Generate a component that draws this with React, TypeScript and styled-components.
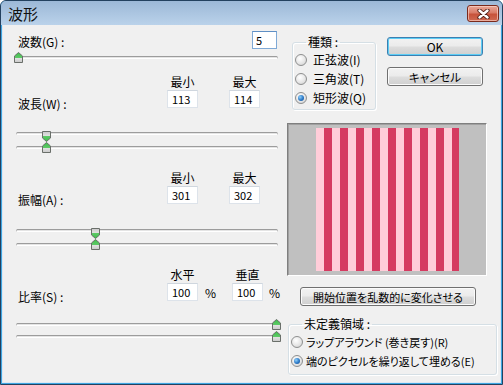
import React from 'react';
import styled, { createGlobalStyle } from 'styled-components';

const GlobalStyle = createGlobalStyle`
  html, body {
    margin: 0;
    padding: 0;
    background: #ffffff;
  }
  body {
    font-family: "Noto Sans CJK JP", "Noto Sans", sans-serif;
    font-size: 12px;
    color: #000;
    font-feature-settings: "palt";
  }
`;

const Window = styled.div`
  width: 503px;
  height: 385px;
  box-sizing: border-box;
  border: 1px solid #23415f;
  border-radius: 6px 6px 0 0;
  background: #3ea6e2;
  display: flex;
  flex-direction: column;
  overflow: hidden;
`;

const TitleBar = styled.div`
  height: 24px;
  flex: none;
  background: linear-gradient(#9cb8d7, #bad2ea);
  display: flex;
  align-items: flex-start;
  justify-content: space-between;
  padding: 0 3px 0 7px;
`;

const TitleText = styled.span`
  font-size: 15px;
  line-height: 24px;
  padding-top: 1px;
  color: #111;
`;

const CloseButton = styled.div`
  margin-top: 4px;
  width: 32px;
  height: 17px;
  box-sizing: border-box;
  border: 1px solid #7a2a1c;
  border-radius: 3px;
  background: linear-gradient(#e9a898 0%, #d97c68 45%, #c7533b 55%, #cf6a52 100%);
  box-shadow: inset 0 0 0 1px rgba(255, 220, 210, 0.6);
  display: flex;
  align-items: center;
  justify-content: center;
`;

const Panel = styled.div`
  flex: 1;
  margin: 0 1px 1px 1px;
  background: #f0f0f0;
  border: 1px solid #dce7f3;
  border-top: none;
  display: grid;
  grid-template-columns: 261px 210px;
  column-gap: 10px;
  align-items: start;
  padding: 6px 0 0 13px;
`;

const LeftColumn = styled.div`
  display: flex;
  flex-direction: column;
`;

const RightColumn = styled.div`
  display: flex;
  flex-direction: column;
  padding-top: 4px;
`;

const TopLine = styled.div`
  display: flex;
  justify-content: space-between;
  height: 18px;
`;

const Label = styled.span<{ $top: number }>`
  margin-top: ${(p) => p.$top}px;
  line-height: 14px;
  padding-left: 2px;
  white-space: nowrap;
`;

const NumBox = styled.input<{ $col?: number; $focus?: boolean }>`
  grid-row: 2;
  grid-column: ${(p) => p.$col ?? 'auto'};
  width: ${(p) => (p.$focus ? 25 : 31)}px;
  height: 18px;
  box-sizing: border-box;
  margin: 0;
  padding: 0 0 0 ${(p) => (p.$focus ? 3 : 4)}px;
  border: 1px solid ${(p) => (p.$focus ? '#7fa9d6' : '#dde3ea')};
  border-top-color: ${(p) => (p.$focus ? '#5f8fc5' : '#cfd6de')};
  background: #fff;
  font-family: "Noto Sans CJK JP", "Noto Sans", sans-serif;
  font-size: 11px;
  color: #000;
  outline: none;
`;

const ParamGrid = styled.div<{ $cols: string; $mt: number }>`
  display: grid;
  grid-template-columns: ${(p) => p.$cols};
  grid-template-rows: 15px 18px;
  margin-top: ${(p) => p.$mt}px;
`;

const ColHead = styled.span<{ $col: number }>`
  grid-row: 1;
  grid-column: ${(p) => p.$col};
  justify-self: center;
  line-height: 14px;
`;

const GridLabel = styled.span`
  grid-row: 2;
  grid-column: 1;
  margin-top: 7px;
  line-height: 14px;
  padding-left: 2px;
  white-space: nowrap;
`;

const Percent = styled.span<{ $col: number; $pl: number }>`
  grid-row: 2;
  grid-column: ${(p) => p.$col};
  padding-left: ${(p) => p.$pl}px;
  margin-top: 3px;
  line-height: 14px;
`;

const Tracks = styled.div<{ $mt: number; $gap: number }>`
  display: flex;
  flex-direction: column;
  gap: ${(p) => p.$gap}px;
  margin-top: ${(p) => p.$mt}px;
`;

const TrackRow = styled.div`
  position: relative;
  height: 12px;
`;

const Groove = styled.div`
  position: absolute;
  left: 0;
  right: -1px;
  top: 5px;
  height: 3px;
  box-sizing: border-box;
  border: 1px solid #b9b9b9;
  border-top-color: #9c9c9c;
  border-bottom-color: #ffffff;
  border-radius: 2px;
  background: #e4e4e4;
`;

const ThumbWrap = styled.span<{ $x: number; $down?: boolean }>`
  position: absolute;
  left: ${(p) => p.$x - 4.5}px;
  top: ${(p) => (p.$down ? 4 : 1)}px;
  width: 9px;
  height: 11px;
  display: block;
  line-height: 0;
`;

const TopRow = styled.div`
  display: flex;
  align-items: flex-start;
`;

const Group = styled.fieldset<{ $w: number; $ml: number; $mt?: number; $pb: number; $fs?: number }>`
  margin: ${(p) => p.$mt ?? 0}px 0 0 ${(p) => p.$ml}px;
  width: ${(p) => p.$w}px;
  min-width: 0;
  box-sizing: border-box;
  border: 1px solid #d5dfe5;
  border-radius: 3px;
  box-shadow: inset 1px 1px 0 #ffffff, 1px 1px 0 #ffffff;
  padding: 1px 0 ${(p) => p.$pb}px 2px;
  font-size: ${(p) => p.$fs ?? 12}px;
`;

const Legend = styled.legend`
  margin-left: 11px;
  padding: 0 2px;
  line-height: 14px;
  font-size: 12px;
`;

const Choice = styled.label<{ $gap: number }>`
  display: flex;
  align-items: center;
  height: 19px;
  gap: ${(p) => p.$gap}px;
  white-space: nowrap;
`;

const RadioDot = styled.span<{ $on?: boolean }>`
  width: 12px;
  height: 12px;
  flex: none;
  box-sizing: border-box;
  border-radius: 50%;
  border: 1px solid #8e8f8f;
  background: radial-gradient(circle at 40% 35%, #ffffff 0%, #e6e6e6 55%, #c9c9c9 100%);
  display: flex;
  align-items: center;
  justify-content: center;

  &::after {
    content: '';
    width: 6px;
    height: 6px;
    border-radius: 50%;
    background: ${(p) =>
      p.$on ? 'radial-gradient(circle at 35% 35%, #8fd0fb 0%, #2b78c6 55%, #154d8c 100%)' : 'transparent'};
  }
`;

const ButtonStack = styled.div`
  display: flex;
  flex-direction: column;
  gap: 11px;
  margin: 2px 0 0 11px;
`;

const PushButton = styled.button<{ $w: number; $default?: boolean; $ml?: number; $mt?: number; $fs?: number }>`
  width: ${(p) => p.$w}px;
  height: 19px;
  margin: ${(p) => p.$mt ?? 0}px 0 0 ${(p) => p.$ml ?? 0}px;
  padding: 0;
  box-sizing: border-box;
  border: 1px solid ${(p) => (p.$default ? '#3c7fb1' : '#707070')};
  border-radius: 3px;
  background: linear-gradient(#f2f2f2 0%, #ebebeb 48%, #dddddd 52%, #cfcfcf 100%);
  box-shadow: inset 0 0 0 1px ${(p) => (p.$default ? '#5ccdf5' : '#fbfbfb')};
  font-family: "Noto Sans CJK JP", "Noto Sans", sans-serif;
  font-feature-settings: "palt";
  font-size: ${(p) => p.$fs ?? 12}px;
  line-height: 16px;
  color: #000;
`;

const Preview = styled.div`
  margin-top: 13px;
  width: 200px;
  height: 153px;
  box-sizing: border-box;
  border: 1px solid;
  border-color: #7f7f7f #ffffff #ffffff #7f7f7f;
  box-shadow: inset 1px 1px 0 #a0a0a0;
  background: #c0c0c0;
  display: flex;
  align-items: center;
  justify-content: center;
`;

const Stripes = styled.div`
  width: 143px;
  height: 143px;
  background: repeating-linear-gradient(90deg, #ffcdd9 0 8px, #d53b61 8px 16px);
`;

const Thumb: React.FC<{ x: number; down?: boolean }> = ({ x, down }) => (
  <ThumbWrap $x={x} $down={down}>
    <svg width="9" height="11" viewBox="0 0 9 11">
      <defs>
        <linearGradient id="thumbUp" x1="0" y1="0" x2="0" y2="1">
          <stop offset="0" stopColor="#3fbf4c" />
          <stop offset="0.5" stopColor="#5cc865" />
          <stop offset="0.55" stopColor="#e2e2e2" />
          <stop offset="1" stopColor="#c9c9c9" />
        </linearGradient>
        <linearGradient id="thumbDown" x1="0" y1="1" x2="0" y2="0">
          <stop offset="0" stopColor="#3fbf4c" />
          <stop offset="0.5" stopColor="#5cc865" />
          <stop offset="0.55" stopColor="#e2e2e2" />
          <stop offset="1" stopColor="#c9c9c9" />
        </linearGradient>
      </defs>
      {down ? (
        <polygon points="0.5,0.5 8.5,0.5 8.5,7 4.5,10.5 0.5,7" fill="url(#thumbDown)" stroke="#6a6f6a" />
      ) : (
        <polygon points="4.5,0.5 8.5,4 8.5,10.5 0.5,10.5 0.5,4" fill="url(#thumbUp)" stroke="#6a6f6a" />
      )}
    </svg>
  </ThumbWrap>
);

const Hourglass: React.FC<{ x: number; mt: number }> = ({ x, mt }) => (
  <Tracks $mt={mt} $gap={2}>
    <TrackRow>
      <Groove />
      <Thumb x={x} down />
    </TrackRow>
    <TrackRow>
      <Groove />
      <Thumb x={x} />
    </TrackRow>
  </Tracks>
);

const MinMax: React.FC<{ label: string; mt: number; lo: string; hi: string }> = ({ label, mt, lo, hi }) => (
  <ParamGrid $cols="151px 31px 31px 31px 17px" $mt={mt}>
    <ColHead $col={2}>最小</ColHead>
    <ColHead $col={4}>最大</ColHead>
    <GridLabel>{label}</GridLabel>
    <NumBox $col={2} defaultValue={lo} readOnly />
    <NumBox $col={4} defaultValue={hi} readOnly />
  </ParamGrid>
);

const Radio: React.FC<{ on?: boolean; gap: number; children: React.ReactNode }> = ({ on, gap, children }) => (
  <Choice $gap={gap}>
    <RadioDot $on={on} />
    <span>{children}</span>
  </Choice>
);

export default function App() {
  return (
    <>
      <GlobalStyle />
      <Window>
        <TitleBar>
          <TitleText>波形</TitleText>
          <CloseButton>
            <svg width="13" height="10" viewBox="0 0 13 10">
              <path d="M2.5 1.5 L10.5 8.5 M10.5 1.5 L2.5 8.5" stroke="#4d1b12" strokeWidth="4.2" strokeLinecap="round" />
              <path d="M2.5 1.5 L10.5 8.5 M10.5 1.5 L2.5 8.5" stroke="#ffffff" strokeWidth="2.4" strokeLinecap="round" />
            </svg>
          </CloseButton>
        </TitleBar>
        <Panel>
          <LeftColumn>
            <TopLine>
              <Label $top={4}>波数(G) :</Label>
              <NumBox $focus defaultValue="5" readOnly />
            </TopLine>
            <Tracks $mt={2} $gap={0}>
              <TrackRow>
                <Groove />
                <Thumb x={2.5} />
              </TrackRow>
            </Tracks>

            <MinMax label="波長(W) :" mt={12} lo="113" hi="114" />
            <Hourglass x={30} mt={19} />

            <MinMax label="振幅(A) :" mt={18} lo="301" hi="302" />
            <Hourglass x={79} mt={20} />

            <ParamGrid $cols="151px 31px 34px 31px 14px" $mt={18}>
              <ColHead $col={2}>水平</ColHead>
              <ColHead $col={4}>垂直</ColHead>
              <GridLabel>比率(S) :</GridLabel>
              <NumBox $col={2} defaultValue="100" readOnly />
              <Percent $col={3} $pl={7}>%</Percent>
              <NumBox $col={4} defaultValue="100" readOnly />
              <Percent $col={5} $pl={6}>%</Percent>
            </ParamGrid>
            <Tracks $mt={17} $gap={0}>
              <TrackRow>
                <Groove />
                <Thumb x={260} />
              </TrackRow>
              <TrackRow>
                <Groove />
                <Thumb x={260} />
              </TrackRow>
            </Tracks>
          </LeftColumn>

          <RightColumn>
            <TopRow>
              <Group $w={84} $ml={5} $pb={2}>
                <Legend>種類 :</Legend>
                <Radio gap={6}>正弦波(I)</Radio>
                <Radio gap={6}>三角波(T)</Radio>
                <Radio gap={6} on>
                  矩形波(Q)
                </Radio>
              </Group>
              <ButtonStack>
                <PushButton $w={96} $default>
                  OK
                </PushButton>
                <PushButton $w={96} $fs={11.5}>キャンセル</PushButton>
              </ButtonStack>
            </TopRow>

            <Preview>
              <Stripes />
            </Preview>

            <PushButton $w={176} $ml={13} $mt={11} $fs={11}>
              開始位置を乱数的に変化させる
            </PushButton>

            <Group $w={209} $ml={1} $mt={11} $pb={4} $fs={11}>
              <Legend>未定義領域 :</Legend>
              <Radio gap={3}>ラップアラウンド (巻き戻す)(R)</Radio>
              <Radio gap={3} on>
                端のピクセルを繰り返して埋める(E)
              </Radio>
            </Group>
          </RightColumn>
        </Panel>
      </Window>
    </>
  );
}
